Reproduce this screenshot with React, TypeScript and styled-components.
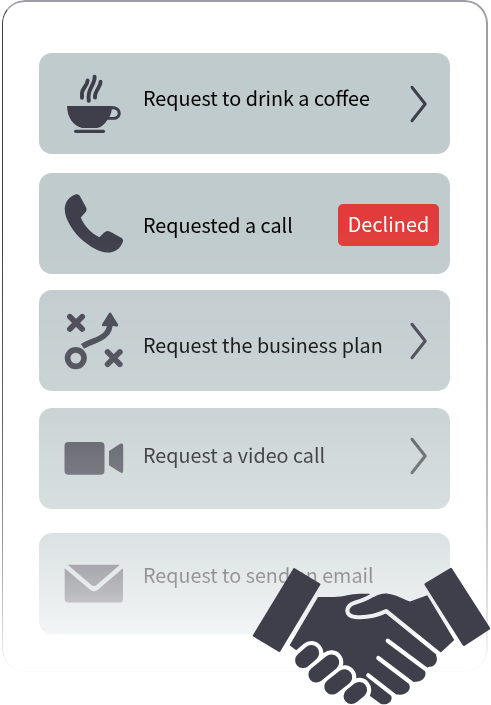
import React from "react";
import styled, { createGlobalStyle } from "styled-components";

const INK = "#3e3f4b";

const GlobalStyle = createGlobalStyle`
  *, *::before, *::after { box-sizing: border-box; }
  body { margin: 0; background: #fff; overflow: hidden; }
`;

const Page = styled.main`
  position: relative;
  width: 491px;
  height: 705px;
  padding-left: 2px;
  overflow: hidden;
  font-family: "Noto Sans CJK SC", "Noto Sans", sans-serif;
`;

const fade = `linear-gradient(
  to bottom,
  #000 230px,
  rgba(0, 0, 0, 0.89) 345px,
  rgba(0, 0, 0, 0.83) 408px,
  rgba(0, 0, 0, 0.73) 456px,
  rgba(0, 0, 0, 0.63) 509px,
  rgba(0, 0, 0, 0.56) 533px,
  rgba(0, 0, 0, 0.42) 576px,
  rgba(0, 0, 0, 0.2) 634px,
  rgba(0, 0, 0, 0.02) 672px
)`;

const Panel = styled.section`
  width: 486px;
  height: 672px;
  padding: 51px 36px 0;
  border: solid ${INK};
  border-width: 2px 2px 1px 1px;
  border-color: #9f9da4 #9f9da4 ${INK} ${INK};
  border-radius: 23px;
  mask-image: ${fade};
`;

const Card = styled.div<{ $gap: number }>`
  display: flex;
  align-items: flex-start;
  width: 411px;
  height: 101px;
  margin-top: ${(p) => p.$gap}px;
  padding-left: 24px;
  border-radius: 13px;
  background: #c0cbcd;
`;

const Icon = styled.svg`
  flex: none;
  width: 62px;
  height: 101px;
  fill: ${INK};
  stroke: ${INK};
  stroke-width: 0;
`;

const Label = styled.span<{ $baseline: number }>`
  width: 246.5px;
  margin-left: 18px;
  padding-top: ${(p) => p.$baseline - 22.6}px;
  font-size: 19.75px;
  line-height: 30px;
  white-space: nowrap;
  color: #000;
`;

const ChevronIcon = styled.svg<{ $top: number }>`
  width: 20px;
  height: 40px;
  margin: ${(p) => p.$top}px 0 0 19px;
  fill: none;
  stroke: ${INK};
  stroke-width: 3;
  stroke-linecap: round;
  stroke-linejoin: round;
`;

const Status = styled.span`
  flex: none;
  width: 101px;
  height: 42px;
  margin: 31px 0 0 -51.5px;
  border-radius: 5px;
  background: #e13c3b;
  color: #fff;
  font-size: 19.75px;
  line-height: 39px;
  letter-spacing: 0.1px;
  text-align: center;
`;

const Handshake = styled.svg`
  position: absolute;
  left: 245px;
  top: 560px;
  width: 246px;
  height: 145px;
  fill: ${INK};
`;

function Chevron({ top }: { top: number }) {
  return (
    <ChevronIcon $top={top} viewBox="0 0 20 40">
      <path d="M3 3.3 16.2 20 3 36.7" />
    </ChevronIcon>
  );
}

function CoffeeIcon() {
  return (
    <Icon viewBox="63 53 62 101">
      <path d="M67 106H111.5C117 106 120.7 109 120.7 113.2C120.7 117.2 117.7 119.8 113.5 119.8H107.5C104.5 124.2 101 128 96.5 128H82C73 125.5 67.5 118 67 106ZM111.8 109.2C111.5 112.3 110.5 114.8 109.4 117H113.2C116 117 117.7 115.5 117.7 113.2C117.7 110.6 115.6 109 111.8 109.2Z" fillRule="evenodd" />
      <path d="M75.7 131.3H103.4" fill="none" strokeWidth="3.3" strokeLinecap="round" />
      <path d="M87.6 80.5C87.6 85.5 82.2 87.9 82 93.2L82 97.8M94.6 76.7C95.2 85.8 86.4 88.2 88.8 100.9M100.6 81.8C100.6 87.8 94.4 90.4 95 97.6" fill="none" strokeWidth="3.9" strokeLinecap="round" />
    </Icon>
  );
}

function PhoneIcon() {
  return (
    <Icon viewBox="63 173 62 101">
      <path d="M74.8 194.7C77 193.8 79 194.4 80 196.3L86 207.2C87 209.2 86.7 211 85.2 212.6L80.8 217.5C84 225.7 91.2 233.3 99.4 237.2L104.2 232.5C106.2 230.7 108.1 230.5 110.3 231.7L121.1 237.7C123 238.7 123.5 240.3 122.7 242.3C120.2 249 114.6 252.8 107.4 252.6C99.3 252.2 91.5 247.7 83.4 241.1C74.5 233.5 64.6 219.8 64.7 208.7C65 202.2 68.7 197 74.8 194.7Z" />
    </Icon>
  );
}

function PlanIcon() {
  return (
    <Icon viewBox="63 290 62 101">
      <g fill="none" strokeWidth="5.7" strokeLinecap="round">
        <path d="M69.9 316.7 82.2 328.9M82.2 316.7 69.9 328.9M107.6 352.1 119.8 364.3M119.8 352.1 107.6 364.3" />
        <circle cx="75.8" cy="358.1" r="8.2" />
        <path d="M82.5 346.4C91 340.6 98.3 341.3 105.2 334.8C108.5 331.6 110 328.7 109.9 323.5" strokeLinecap="butt" />
      </g>
      <path d="M108.6 313.7Q110.1 311.5 111.5 313.7L118 324.2Q118.7 326.8 116 326.5L110.2 325.5 104.4 326.3Q101.3 326.5 102.2 323.9Z" />
    </Icon>
  );
}

function VideoIcon() {
  return (
    <Icon viewBox="63 408 62 101">
      <rect x="64.5" y="442" width="40" height="32.8" rx="4" />
      <path d="M109 451 119.8 443.9Q123.2 442.5 123.2 445.7V471Q123 474 120 472.3L109 465.3Z" />
    </Icon>
  );
}

function MailIcon() {
  return (
    <Icon viewBox="63 533 62 101">
      <path d="M67.8 564.7H120L96.3 585.2Q94 587 91.7 585.2Z" />
      <path d="M64.7 568.2 89.5 589.3Q94 593 98.5 589.3L123 568.2V599Q123 602.6 119.4 602.6H68.3Q64.7 602.6 64.7 599Z" />
    </Icon>
  );
}

const rows = [
  { text: "Request to drink a coffee", icon: <CoffeeIcon />, gap: 0, baseline: 53, chevron: 31 },
  { text: "Requested a call", icon: <PhoneIcon />, gap: 19, baseline: 60, status: "Declined" },
  { text: "Request the business plan", icon: <PlanIcon />, gap: 16, baseline: 63, chevron: 31 },
  { text: "Request a video call", icon: <VideoIcon />, gap: 17, baseline: 55, chevron: 28 },
  { text: "Request to send an email", icon: <MailIcon />, gap: 24, baseline: 50 },
];

const fingers = [
  "M311.3 653 303 660.2",
  "M331.3 662.3 316.3 674.7",
  "M344.3 677.2 332.2 686.7",
  "M359.2 689.8 351.5 696.2",
];

export default function App() {
  return (
    <>
      <GlobalStyle />
      <Page>
        <Panel>
          {rows.map((row) => (
            <Card key={row.text} $gap={row.gap}>
              {row.icon}
              <Label $baseline={row.baseline}>{row.text}</Label>
              {row.chevron !== undefined && <Chevron top={row.chevron} />}
              {row.status && <Status>{row.status}</Status>}
            </Card>
          ))}
        </Panel>
        <Handshake viewBox="245 560 246 145">
          <defs>
            <mask id="gaps" maskUnits="userSpaceOnUse" x="245" y="560" width="246" height="145">
              <rect x="245" y="560" width="246" height="145" fill="#fff" />
              <g fill="none" stroke="#000" strokeWidth="4.2" strokeLinecap="round" strokeLinejoin="round">
                <path d="M376 592.5C369 598.5 362 600.6 355.5 602.4C344.5 605.5 344.8 616.3 355.2 617C367 618.2 377.5 615.2 386.2 611.2L441 655.5" />
                <path d="M387.7 640.8 427 670M378.3 658 412 683.5M368.3 675.3 394 695.4" />
              </g>
              <g fill="none" stroke="#000" strokeWidth="24" strokeLinecap="round">
                {fingers.map((d) => <path key={d} d={d} />)}
              </g>
            </mask>
          </defs>
          <path d="M294.7 568.2 320 583.4Q320.8 584 320.3 584.8L280.4 651.2Q279.7 652.4 278.6 651.7L253.3 636.5Q252.5 636 253 635L293.2 568.8Q293.8 567.7 294.7 568.2Z" />
          <path d="M450.4 568 425 583.3Q424 584 424.6 585L462.7 645.3Q463.5 646.6 464.7 645.8L489.6 629.5Q490.6 628.8 490 627.8L452 568.5Q451.4 567.4 450.4 568Z" />
          <g mask="url(#gaps)">
            <path d="M318 597H332C343 597.5 350 593.8 360 593.8H369L374 597C378 594.5 383 593 388 593.7C396 594.6 402 598.6 410 601.5L427.3 595.3 454.3 640 440 653.2 436 655C438.5 660.5 435.5 667 429 666.8L424.5 669.5C427.8 676 422.5 682.5 415 681.7L409 684.2C412.2 689.5 405.5 696 398.5 694.5L390.7 694.6C394 700.5 388 705.8 381 704L370 696 351 685 303 655.5 289.6 645.3Z" />
          </g>
          <g fill="none" stroke={INK} strokeWidth="15.8" strokeLinecap="round">
            {fingers.map((d) => <path key={d} d={d} />)}
          </g>
        </Handshake>
      </Page>
    </>
  );
}
